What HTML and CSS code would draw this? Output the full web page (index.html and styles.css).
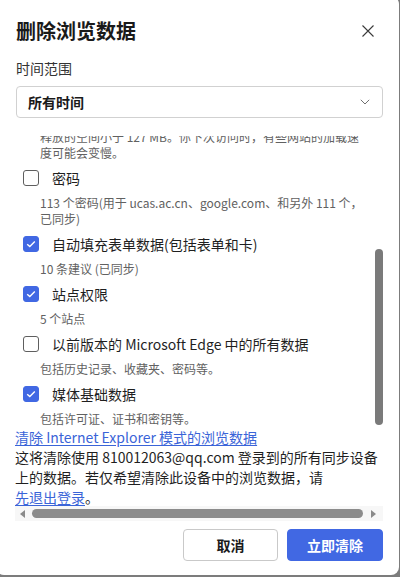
FILE: index.html
```html
<!DOCTYPE html>
<html lang="zh-CN">
<head>
<meta charset="utf-8">
<title>删除浏览数据</title>
<link rel="stylesheet" href="styles.css">
</head>
<body>
<div class="dialog">
  <div class="header">
    <h1 class="title">删除浏览数据</h1>
    <button class="close" aria-label="关闭">
      <svg width="12" height="12" viewBox="0 0 12 12"><path d="M0.5 0.5 L11.5 11.5 M11.5 0.5 L0.5 11.5" stroke="#3a3a3a" stroke-width="1.1" fill="none"/></svg>
    </button>
  </div>
  <div class="label">时间范围</div>
  <div class="select">
    <span class="select-text">所有时间</span>
    <svg class="chevron" width="10" height="6" viewBox="0 0 10 6"><path d="M0.8 0.8 L5 5 L9.2 0.8" stroke="#707070" stroke-width="1" fill="none"/></svg>
  </div>
  <div class="list">
    <div class="list-content">
      <div class="desc desc-first">释放的空间小于 127 MB。你下次访问时，有些网站的加载速度可能会变慢。</div>
      <div class="item">
        <div class="row"><span class="cb"></span><span class="row-label">密码</span></div>
        <div class="desc">113 个密码(用于 ucas.ac.cn、google.com、和另外 111 个，已同步)</div>
      </div>
      <div class="item">
        <div class="row"><span class="cb checked"><svg width="10" height="8" viewBox="0 0 10 8"><path d="M1.2 4.2 L3.8 6.6 L8.8 1.4" stroke="#fff" stroke-width="1.4" fill="none"/></svg></span><span class="row-label">自动填充表单数据(包括表单和卡)</span></div>
        <div class="desc">10 条建议 (已同步)</div>
      </div>
      <div class="item">
        <div class="row"><span class="cb checked"><svg width="10" height="8" viewBox="0 0 10 8"><path d="M1.2 4.2 L3.8 6.6 L8.8 1.4" stroke="#fff" stroke-width="1.4" fill="none"/></svg></span><span class="row-label">站点权限</span></div>
        <div class="desc">5 个站点</div>
      </div>
      <div class="item">
        <div class="row"><span class="cb"></span><span class="row-label">以前版本的 Microsoft Edge 中的所有数据</span></div>
        <div class="desc">包括历史记录、收藏夹、密码等。</div>
      </div>
      <div class="item">
        <div class="row"><span class="cb checked"><svg width="10" height="8" viewBox="0 0 10 8"><path d="M1.2 4.2 L3.8 6.6 L8.8 1.4" stroke="#fff" stroke-width="1.4" fill="none"/></svg></span><span class="row-label">媒体基础数据</span></div>
        <div class="desc">包括许可证、证书和密钥等。</div>
      </div>
    </div>
    <div class="vbar"><div class="vthumb"></div></div>
  </div>
  <div class="info">
    <a class="link" href="#">清除 Internet Explorer 模式的浏览数据</a>
    <p class="note">这将清除使用 810012063@qq.com 登录到的所有同步设备上的数据。若仅希望清除此设备中的浏览数据，请<a class="link nowrap" href="#">先退出登录</a>。</p>
  </div>
  <div class="hbar">
    <span class="arrow arrow-left"></span>
    <div class="hthumb"></div>
    <span class="arrow arrow-right"></span>
  </div>
  <div class="buttons">
    <button class="btn btn-cancel">取消</button>
    <button class="btn btn-primary">立即清除</button>
  </div>
</div>
</body>
</html>
```

FILE: styles.css
```css
html, body {
  margin: 0;
  padding: 0;
  background: #7c7c7c;
  overflow: hidden;
}

body {
  font-family: "Noto Sans CJK SC", sans-serif;
  color: #1f1f1f;
}

.dialog {
  box-sizing: border-box;
  margin: -4px 0 0 -4px;
  width: 403px;
  height: 579px;
  padding: 21px 16px 0 20px;
  background: #ffffff;
  border-radius: 8px;
  display: flex;
  flex-direction: column;
}

.header {
  display: flex;
  align-items: center;
  justify-content: space-between;
  height: 28px;
}

.title {
  margin: 0;
  font-size: 20px;
  line-height: 28px;
  font-weight: 700;
  color: #1a1a1a;
}

.close {
  width: 30px;
  height: 28px;
  padding: 0;
  border: none;
  background: transparent;
  display: flex;
  align-items: center;
  justify-content: center;
}

.label {
  margin-top: 13px;
  font-size: 14px;
  line-height: 20px;
  color: #333333;
}

.select {
  box-sizing: border-box;
  margin-top: 8px;
  height: 32px;
  border: 1px solid #d1d1d1;
  border-radius: 4px;
  display: flex;
  align-items: center;
  justify-content: space-between;
  padding: 0 12px 0 11px;
}

.select-text {
  font-size: 14px;
  line-height: 20px;
  font-weight: 700;
  color: #1a1a1a;
}

.list {
  margin-top: 18px;
  height: 291px;
  display: flex;
  flex-shrink: 0;
}

.list-content {
  flex: 1;
  min-width: 0;
  overflow: hidden;
  padding-left: 7px;
}

.desc {
  margin: 7px 10px 7px 17px;
  font-size: 12px;
  line-height: 16px;
  color: #616161;
}

.desc-first {
  margin-top: -7px;
}

.row {
  height: 20px;
  display: flex;
  align-items: center;
}

.cb {
  box-sizing: border-box;
  width: 16px;
  height: 16px;
  border: 1px solid #5f5f5f;
  border-radius: 3px;
  flex-shrink: 0;
  display: flex;
  align-items: center;
  justify-content: center;
}

.cb.checked {
  background: #4168e3;
  border-color: #4168e3;
}

.row-label {
  margin-left: 13px;
  font-size: 14px;
  line-height: 20px;
  color: #1f1f1f;
}

.vbar {
  width: 8px;
  flex-shrink: 0;
}

.vthumb {
  margin-top: 113px;
  height: 176px;
  width: 8px;
  border-radius: 4px;
  background: #7a7a7a;
}

.info {
  font-size: 14px;
  line-height: 20px;
  margin-left: -1px;
}

.link {
  color: #3a64d8;
  text-decoration: underline;
  text-underline-offset: 2px;
}

.note {
  margin: 0;
  color: #1f1f1f;
}

.nowrap {
  white-space: nowrap;
}

.hbar {
  box-sizing: border-box;
  height: 15px;
  background: #f7f7f7;
  display: flex;
  align-items: center;
  padding: 0 7px 0 5px;
  margin-left: -1px;
  margin-top: -1px;
}

.arrow {
  width: 0;
  height: 0;
  border-top: 4px solid transparent;
  border-bottom: 4px solid transparent;
  flex-shrink: 0;
}

.arrow-left {
  border-right: 5px solid #8a8a8a;
}

.arrow-right {
  border-left: 5px solid #8a8a8a;
}

.hthumb {
  flex: 1;
  height: 9px;
  border-radius: 5px;
  background: #8c8c8c;
  margin: 0 8px 0 7px;
}

.buttons {
  margin-top: 8px;
  display: flex;
  justify-content: flex-end;
  gap: 9px;
}

.btn {
  box-sizing: border-box;
  height: 32px;
  width: 96px;
  border-radius: 4px;
  font-size: 14px;
  font-weight: 700;
  font-family: "Noto Sans CJK SC", sans-serif;
  cursor: pointer;
}

.btn-cancel {
  width: 95px;
  background: #ffffff;
  border: 1px solid #c9c9c9;
  color: #1a1a1a;
}

.btn-primary {
  background: #4168e3;
  border: 1px solid #4168e3;
  color: #ffffff;
}
```
